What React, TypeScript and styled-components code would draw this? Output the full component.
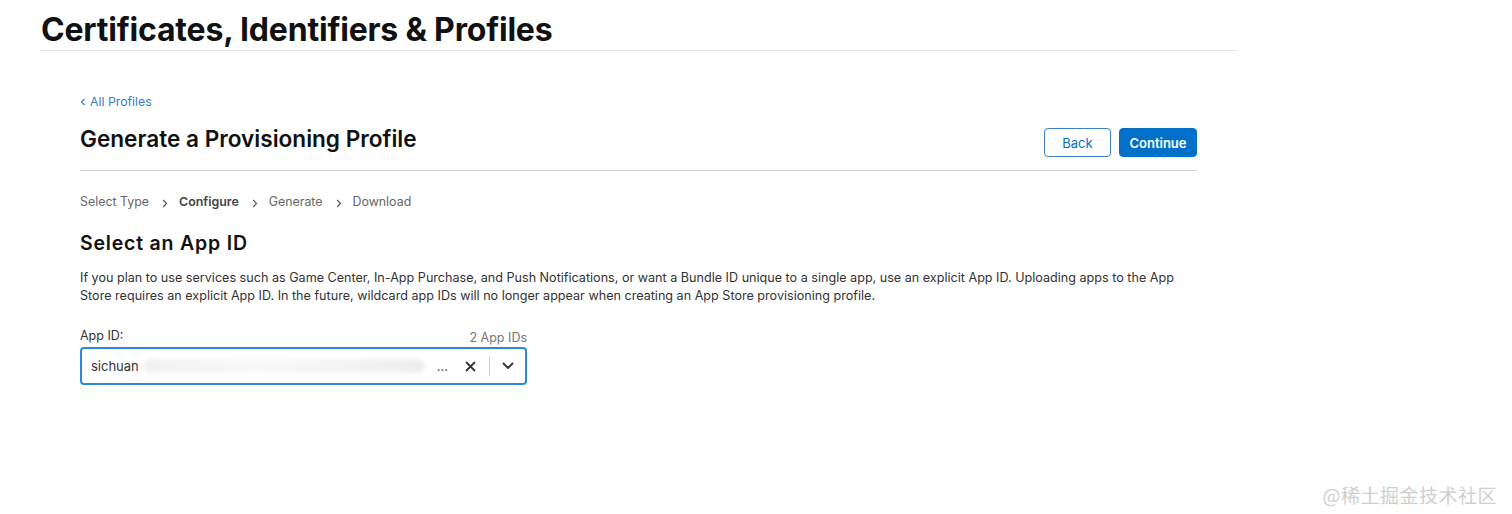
import { createGlobalStyle, styled } from "styled-components";

const GlobalStyle = createGlobalStyle`
  html, body {
    margin: 0;
    padding: 0;
    background: #fff;
    font-family: Inter, "Noto Sans", "Liberation Sans", sans-serif;
    color: #1d1d1f;
  }
`;

const Page = styled.div`
  width: 1195px;
  margin-left: 41px;
  padding-top: 12px;
  height: 514px;
  box-sizing: border-box;
  position: relative;
`;

const PageTitle = styled.h1`
  margin: 0;
  font-size: 32px;
  line-height: 36px;
  font-weight: 700;
  letter-spacing: -0.2px;
  color: #111;
  padding-bottom: 2px;
  border-bottom: 1px solid #e3e3e3;
`;

const Content = styled.main`
  width: 1117px;
  margin-left: 39px;
  padding-top: 39px;
`;

const BackLink = styled.a`
  font-size: 12.3px;
  line-height: 16px;
  color: #3b7dc8;
  text-decoration: none;
  display: inline-flex;
  align-items: center;
  gap: 4px;
`;

const HeaderRow = styled.div`
  display: flex;
  align-items: flex-end;
  justify-content: space-between;
  padding: 15px 0 13px;
  border-bottom: 1px solid #d6d6d6;
`;

const Heading = styled.h2`
  margin: 0 0 4px;
  font-size: 22.6px;
  line-height: 28px;
  font-weight: 600;
  color: #111;
`;

const Actions = styled.div`
  display: flex;
  gap: 8px;
  margin-bottom: 0;
`;

const Button = styled.button<{ $primary?: boolean }>`
  height: 29px;
  padding: 0;
  width: ${(p) => (p.$primary ? "78px" : "67px")};
  border-radius: 4px;
  font-family: inherit;
  font-size: 13px;
  font-weight: ${(p) => (p.$primary ? 600 : 400)};
  border: 1px solid ${(p) => (p.$primary ? "#0070c9" : "#3a80c9")};
  background: ${(p) => (p.$primary ? "#0070c9" : "#fff")};
  color: ${(p) => (p.$primary ? "#fff" : "#0070c9")};
  cursor: pointer;
`;

const Steps = styled.ol`
  list-style: none;
  margin: 0;
  padding: 22px 0 0;
  display: flex;
  align-items: center;
  font-size: 12.4px;
  line-height: 18px;
  color: #666;
`;

const Step = styled.li<{ $active?: boolean }>`
  display: flex;
  align-items: center;
  font-weight: ${(p) => (p.$active ? 600 : 400)};
  color: ${(p) => (p.$active ? "#444" : "#666")};
`;

const Chevron = styled.span`
  display: inline-flex;
  margin: 3px 11px 0 13px;
  color: #555;
`;

const SectionTitle = styled.h3`
  margin: 20px 0 0;
  font-size: 19.5px;
  line-height: 24px;
  font-weight: 600;
  letter-spacing: 0.8px;
  color: #111;
`;

const Description = styled.p`
  margin: 14px 0 0;
  font-size: 12.6px;
  line-height: 18px;
  color: #333;
  max-width: 1100px;
`;

const Field = styled.div`
  width: 447px;
  margin-top: 23px;
`;

const FieldHead = styled.div`
  display: flex;
  justify-content: space-between;
  align-items: flex-end;
  font-size: 12.5px;
  line-height: 16px;
`;

const Label = styled.label`
  color: #333;
`;

const Count = styled.span`
  color: #777;
  margin-bottom: -2px;
`;

const Select = styled.div`
  margin-top: 3px;
  height: 38px;
  box-sizing: border-box;
  border: 2px solid #2f86e0;
  border-radius: 4px;
  display: flex;
  align-items: center;
  padding: 0 0 0 9px;
  font-size: 13px;
  color: #333;
`;

const Value = styled.div`
  flex: 1;
  display: flex;
  align-items: center;
  gap: 4px;
  min-width: 0;
`;

const Smudge = styled.span`
  flex: 1;
  height: 14px;
  border-radius: 7px;
  background: linear-gradient(90deg, #f1f1f1 0%, #f9f9f9 40%, #f4f4f4 70%, #eeeeee 100%);
  filter: blur(2px);
  margin-right: 8px;
`;

const Ellipsis = styled.span`
  color: #555;
  margin-right: 9px;
`;

const IconBtn = styled.span`
  width: 26px;
  display: flex;
  align-items: center;
  justify-content: center;
  color: #333;
`;

const Divider = styled.span`
  width: 1px;
  height: 20px;
  background: #d4d4d4;
  margin: 0 5px 0 6px;
`;

const Watermark = styled.div`
  position: absolute;
  right: -261px;
  bottom: 6px;
  font-size: 19px;
  color: #cfcfcf;
  font-family: "Noto Sans CJK SC", sans-serif;
  letter-spacing: 0.5px;
`;

export default function App() {
  return (
    <>
      <GlobalStyle />
      <Page>
        <PageTitle>Certificates, Identifiers &amp; Profiles</PageTitle>
        <Content>
          <BackLink href="#">
            <svg width="6" height="8" viewBox="0 0 6 8" fill="none">
              <path d="M4.5 1L1.5 4l3 3" stroke="currentColor" strokeWidth="1.2" />
            </svg>
            All Profiles
          </BackLink>
          <HeaderRow>
            <Heading>Generate a Provisioning Profile</Heading>
            <Actions>
              <Button>Back</Button>
              <Button $primary>Continue</Button>
            </Actions>
          </HeaderRow>
          <Steps>
            {["Select Type", "Configure", "Generate", "Download"].map((s, i) => (
              <Step key={s} $active={i === 1}>
                {i > 0 && (
                  <Chevron>
                    <svg width="6" height="9" viewBox="0 0 6 9" fill="none">
                      <path d="M1.2 1l3.3 3.5L1.2 8" stroke="currentColor" strokeWidth="1.2" />
                    </svg>
                  </Chevron>
                )}
                {s}
              </Step>
            ))}
          </Steps>
          <SectionTitle>Select an App ID</SectionTitle>
          <Description>
            If you plan to use services such as Game Center, In-App Purchase, and Push Notifications, or want a Bundle ID unique to a single app, use an explicit App ID. Uploading apps to the App Store requires an explicit App ID. In the future, wildcard app IDs will no longer appear when creating an App Store provisioning profile.
          </Description>
          <Field>
            <FieldHead>
              <Label>App ID:</Label>
              <Count>2 App IDs</Count>
            </FieldHead>
            <Select>
              <Value>
                sichuan
                <Smudge />
                <Ellipsis>...</Ellipsis>
              </Value>
              <IconBtn>
                <svg width="11" height="11" viewBox="0 0 11 11">
                  <path d="M1.5 1.5l8 8M9.5 1.5l-8 8" stroke="currentColor" strokeWidth="1.8" strokeLinecap="round" />
                </svg>
              </IconBtn>
              <Divider />
              <IconBtn>
                <svg width="12" height="8" viewBox="0 0 12 8">
                  <path d="M1.5 1.5L6 6l4.5-4.5" stroke="currentColor" strokeWidth="1.8" fill="none" strokeLinecap="round" strokeLinejoin="round" />
                </svg>
              </IconBtn>
              <span style={{ width: 4 }} />
            </Select>
          </Field>
        </Content>
        <Watermark>@稀土掘金技术社区</Watermark>
      </Page>
    </>
  );
}
